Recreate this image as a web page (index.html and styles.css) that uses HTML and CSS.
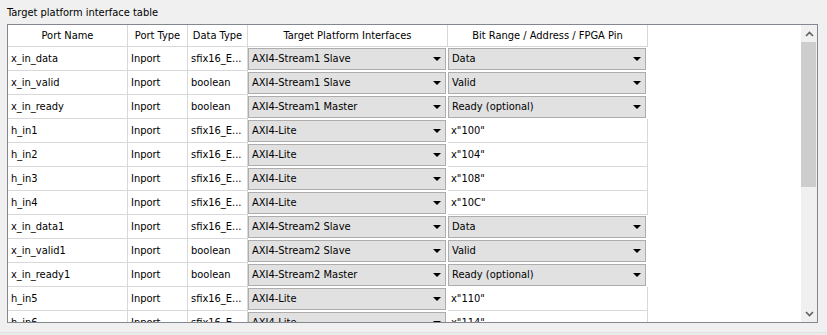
FILE: index.html
```html
<!DOCTYPE html>
<html lang="en">
<head>
    <meta charset="UTF-8">
    <title>Target platform interface table</title>
    <link rel="stylesheet" href="styles.css">
</head>
<body>
    <div class="panel">
        <div class="panel-title">Target platform interface table</div>

        <div class="table-frame">
            <div class="table-view">
                <!-- header -->
                <div class="row header">
                    <div class="cell">Port Name</div>
                    <div class="cell">Port Type</div>
                    <div class="cell">Data Type</div>
                    <div class="cell">Target Platform Interfaces</div>
                    <div class="cell">Bit Range / Address / FPGA Pin</div>
                </div>

                <div class="row">
                    <div class="cell">x_in_data</div>
                    <div class="cell">Inport</div>
                    <div class="cell">sfix16_E...</div>
                    <div class="cell"><div class="combo">AXI4-Stream1 Slave</div></div>
                    <div class="cell"><div class="combo">Data</div></div>
                </div>
                <div class="row">
                    <div class="cell">x_in_valid</div>
                    <div class="cell">Inport</div>
                    <div class="cell">boolean</div>
                    <div class="cell"><div class="combo">AXI4-Stream1 Slave</div></div>
                    <div class="cell"><div class="combo">Valid</div></div>
                </div>
                <div class="row">
                    <div class="cell">x_in_ready</div>
                    <div class="cell">Inport</div>
                    <div class="cell">boolean</div>
                    <div class="cell"><div class="combo">AXI4-Stream1 Master</div></div>
                    <div class="cell"><div class="combo">Ready (optional)</div></div>
                </div>
                <div class="row">
                    <div class="cell">h_in1</div>
                    <div class="cell">Inport</div>
                    <div class="cell">sfix16_E...</div>
                    <div class="cell"><div class="combo">AXI4-Lite</div></div>
                    <div class="cell">x"100"</div>
                </div>
                <div class="row">
                    <div class="cell">h_in2</div>
                    <div class="cell">Inport</div>
                    <div class="cell">sfix16_E...</div>
                    <div class="cell"><div class="combo">AXI4-Lite</div></div>
                    <div class="cell">x"104"</div>
                </div>
                <div class="row">
                    <div class="cell">h_in3</div>
                    <div class="cell">Inport</div>
                    <div class="cell">sfix16_E...</div>
                    <div class="cell"><div class="combo">AXI4-Lite</div></div>
                    <div class="cell">x"108"</div>
                </div>
                <div class="row">
                    <div class="cell">h_in4</div>
                    <div class="cell">Inport</div>
                    <div class="cell">sfix16_E...</div>
                    <div class="cell"><div class="combo">AXI4-Lite</div></div>
                    <div class="cell">x"10C"</div>
                </div>
                <div class="row">
                    <div class="cell">x_in_data1</div>
                    <div class="cell">Inport</div>
                    <div class="cell">sfix16_E...</div>
                    <div class="cell"><div class="combo">AXI4-Stream2 Slave</div></div>
                    <div class="cell"><div class="combo">Data</div></div>
                </div>
                <div class="row">
                    <div class="cell">x_in_valid1</div>
                    <div class="cell">Inport</div>
                    <div class="cell">boolean</div>
                    <div class="cell"><div class="combo">AXI4-Stream2 Slave</div></div>
                    <div class="cell"><div class="combo">Valid</div></div>
                </div>
                <div class="row">
                    <div class="cell">x_in_ready1</div>
                    <div class="cell">Inport</div>
                    <div class="cell">boolean</div>
                    <div class="cell"><div class="combo">AXI4-Stream2 Master</div></div>
                    <div class="cell"><div class="combo">Ready (optional)</div></div>
                </div>
                <div class="row">
                    <div class="cell">h_in5</div>
                    <div class="cell">Inport</div>
                    <div class="cell">sfix16_E...</div>
                    <div class="cell"><div class="combo">AXI4-Lite</div></div>
                    <div class="cell">x"110"</div>
                </div>
                <div class="row">
                    <div class="cell">h_in6</div>
                    <div class="cell">Inport</div>
                    <div class="cell">sfix16_E...</div>
                    <div class="cell"><div class="combo">AXI4-Lite</div></div>
                    <div class="cell">x"114"</div>
                </div>
            </div>

            <!-- vertical scrollbar -->
            <div class="scrollbar">
                <div class="scroll-btn">
                    <svg width="9" height="6" viewBox="0 0 9 6"><path d="M1 5 L4.5 1.5 L8 5" fill="none" stroke="#606060" stroke-width="1.6"/></svg>
                </div>
                <div class="scroll-track">
                    <div class="scroll-thumb"></div>
                </div>
                <div class="scroll-btn">
                    <svg width="9" height="6" viewBox="0 0 9 6"><path d="M1 1 L4.5 4.5 L8 1" fill="none" stroke="#606060" stroke-width="1.6"/></svg>
                </div>
            </div>
        </div>

        <div class="panel-bottom"></div>
    </div>
</body>
</html>
```

FILE: styles.css
```css
/* base */
body {
    margin: 0;
    background-color: #f0f0f0;
    font-family: "DejaVu Sans Condensed", "Liberation Sans", sans-serif;
    font-stretch: condensed;
    font-size: 11px;
    color: #000;
}

.panel {
    width: 827px;
    height: 335px;
    overflow: hidden;
}

.panel-title {
    height: 24px;
    line-height: 26px;
    padding-left: 7px;
    box-sizing: border-box;
}

/* table frame */
.table-frame {
    margin-left: 7px;
    width: 811px;
    height: 299px;
    box-sizing: border-box;
    border: 1px solid #828790;
    background-color: #fff;
    display: flex;
}

.table-view {
    flex: 1;
    overflow: hidden;
}

.row {
    display: grid;
    grid-template-columns: 120px 60px 60px 200px 200px;
    height: 24px;
}

.row.header {
    height: 22px;
}

.cell {
    box-sizing: border-box;
    border-right: 1px solid #d8d8d8;
    border-bottom: 1px solid #d8d8d8;
    padding-left: 3px;
    line-height: 23px;
    white-space: nowrap;
    overflow: hidden;
    position: relative;
}

.header .cell {
    text-align: center;
    padding-left: 0;
    line-height: 22px;
}

/* combo box cells */
.cell:has(.combo) {
    padding: 1px 1px 1px 0;
    border-bottom-color: #fff;
    border-right-color: #fff;
}

.combo {
    height: 22px;
    box-sizing: border-box;
    background-color: #e1e1e1;
    border: 1px solid #adadad;
    padding-left: 3px;
    line-height: 20px;
    position: relative;
}

.combo::after {
    content: "";
    position: absolute;
    right: 4px;
    top: 8px;
    border-left: 4px solid transparent;
    border-right: 4px solid transparent;
    border-top: 4px solid #000;
}

/* scrollbar */
.scrollbar {
    width: 16px;
    background-color: #f0f0f0;
    display: flex;
    flex-direction: column;
}

.scroll-btn {
    height: 17px;
    display: flex;
    justify-content: center;
    align-items: center;
}

.scroll-track {
    flex: 1;
}

.scroll-thumb {
    margin-right: 1px;
    height: 145px;
    background-color: #cdcdcd;
}

.panel-bottom {
    margin-top: 9px;
    height: 3px;
    border-top: 1px solid #e3e3e3;
    background-color: #ebebeb;
}
```
